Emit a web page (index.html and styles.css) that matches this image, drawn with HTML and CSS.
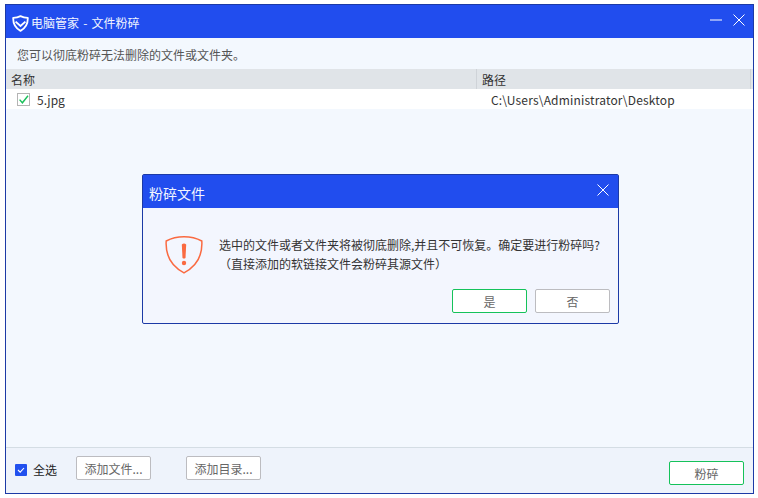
FILE: index.html
```html
<!DOCTYPE html>
<html lang="zh-CN">
<head>
<meta charset="utf-8">
<title>电脑管家 - 文件粉碎</title>
<link rel="stylesheet" href="styles.css">
</head>
<body>
<div class="window">
  <header class="titlebar">
    <svg class="logo" width="17" height="17" viewBox="0 0 17 17" fill="none" stroke="#fff"><path d="M8.5 1.1 C10.6 2.2 13 2.8 15.8 2.9 C16 8.6 14 13 8.5 15.9 C3 13 1 8.6 1.2 2.9 C4 2.8 6.4 2.2 8.5 1.1Z" stroke-width="1.8" stroke-linejoin="round"/><path d="M3.6 6.6 L8.5 11 L13.4 6.6" stroke-width="1.9"/></svg>
    <span class="title">电脑管家 - 文件粉碎</span>
    <span class="spacer"></span>
    <svg class="winctl" width="12" height="12" viewBox="0 0 12 12" stroke="#fff"><path d="M0 6H12"/></svg>
    <svg class="winctl" width="12" height="12" viewBox="0 0 12 12" stroke="#fff"><path d="M.5 .5L11.5 11.5M11.5 .5L.5 11.5"/></svg>
  </header>
  <p class="hint">您可以彻底粉碎无法删除的文件或文件夹。</p>
  <div class="thead">
    <div class="col-name">名称</div>
    <div class="col-path">路径</div>
  </div>
  <div class="row">
    <div class="cell-name">
      <svg class="check" width="13" height="13" viewBox="0 0 13 13" fill="none"><rect x=".5" y=".5" width="12" height="12" fill="#fff" stroke="#b4b4b4"/><path d="M2.6 6.6L5.4 9.8L11 2.8" stroke="#19c05a" stroke-width="1.4"/></svg>
      <span>5.jpg</span>
    </div>
    <div class="cell-path">C:\Users\Administrator\Desktop</div>
  </div>
  <div class="list-fill"></div>
  <footer class="footer">
    <label class="selall">
      <svg width="12" height="12" viewBox="0 0 12 12" fill="none"><rect width="12" height="12" rx="1" fill="#2150ee"/><path d="M3 6L5.2 8.2L9 4" stroke="#fff" stroke-width="1.1"/></svg>
      <span>全选</span>
    </label>
    <button class="btn btn-file">添加文件...</button>
    <button class="btn btn-dir">添加目录...</button>
    <span class="spacer"></span>
    <button class="btn btn-green btn-shred">粉碎</button>
  </footer>
</div>

<div class="dialog">
  <header class="dlg-title">
    <span>粉碎文件</span>
    <svg width="12" height="12" viewBox="0 0 12 12" stroke="#fff"><path d="M.5 .5L11.5 11.5M11.5 .5L.5 11.5"/></svg>
  </header>
  <div class="dlg-body">
    <svg class="warn" width="38" height="38" viewBox="0 0 38 38" fill="none"><path d="M19 .8 C25.5 .8 31.5 2.2 36.8 5 C37.6 18 33 29.5 19 36.8 C5 29.5 .4 18 1.2 5 C6.5 2.2 12.5 .8 19 .8Z" stroke="#fa6a41" stroke-width="1.5"/><path d="M16.8 8.5 Q19 6.6 21.2 8.5 L20.5 22 Q19 23.2 17.5 22 Z" fill="#fa6a41"/><circle cx="19" cy="27" r="2.2" fill="#fa6a41"/></svg>
    <div class="dlg-text">
      <div>选中的文件或者文件夹将被彻底删除,并且不可恢复。确定要进行粉碎吗?</div>
      <div class="dlg-sub">（直接添加的软链接文件会粉碎其源文件）</div>
    </div>
  </div>
  <div class="dlg-actions">
    <button class="btn btn-green">是</button>
    <button class="btn">否</button>
  </div>
</div>
</body>
</html>
```
FILE: styles.css
```css
* { box-sizing: border-box; }
html, body { margin: 0; height: 100%; background: #fff; }
body {
  font-family: "Noto Sans CJK SC", "Noto Sans", sans-serif;
  font-size: 12px;
  color: #333;
  padding: 4px 4px 4px 5px;
  position: relative;
  overflow: hidden;
}
.window {
  height: 490px;
  border: 1px solid #1c3aa6;
  display: flex;
  flex-direction: column;
  background: #f3f8fe;
}
.titlebar {
  height: 33px;
  flex: none;
  background: #214dee;
  display: flex;
  align-items: center;
  padding: 0 8px 0 6px;
  color: #fff;
}
.logo { flex: none; margin-top: 4px; }
.title { margin: 2px 0 0 2px; font-size: 12px; color: #f2f5ff; word-spacing: 1.5px; }
.spacer { flex: 1; }
.winctl { margin: 0 0 4px 11px; flex: none; }
.hint { margin: 0; height: 31px; flex: none; line-height: 33px; padding-left: 11px; color: #555; }
.thead {
  height: 20px;
  flex: none;
  background: #e0e4e8;
  display: flex;
  line-height: 21px;
  color: #333;
}
.col-name { width: 471px; padding-left: 5px; border-right: 1px solid #cfd3d8; }
.col-path { flex: 1; padding-left: 5px; margin-right: 2px; border-right: 1px solid #cfd3d8; }
.row { height: 20px; flex: none; padding-top: 1px; background: #fff; display: flex; align-items: center; }
.cell-name { width: 485px; display: flex; align-items: center; padding-left: 11px; gap: 7px; color: #333; }
.cell-path { flex: 1; color: #333; letter-spacing: .17px; }
.list-fill { flex: 1; }
.footer {
  height: 46px;
  flex: none;
  background: #eef3fb;
  border-top: 1px solid #d4dde4;
  display: flex;
  align-items: flex-start;
  padding: 8px 9px 0 9px;
}
.selall { display: flex; align-items: center; gap: 6px; color: #222; margin-top: 5px; line-height: 17px; width: 61px; }
.btn {
  width: 75px;
  height: 24px;
  padding: 0;
  background: #fff;
  border: 1px solid #bcbcc0;
  border-radius: 2px;
  font: inherit;
  font-size: 12px;
  color: #666;
}
.btn-dir { margin-left: 35px; }
.btn-green { border-color: #15c25a; }
.btn-shred { margin-top: 5px; }
.dialog {
  position: absolute;
  left: 142px;
  top: 174px;
  width: 477px;
  height: 150px;
  border: 1px solid #1c3aa6;
  border-radius: 2px;
  background: #f3f6fe;
  display: flex;
  flex-direction: column;
}
.dlg-title {
  height: 33px;
  flex: none;
  background: #214dee;
  color: #f2f5ff;
  display: flex;
  align-items: center;
  justify-content: space-between;
  padding: 0 9px 4px 6px;
  font-size: 14px;
}
.dlg-title span { padding-top: 7px; }
.dlg-body { display: flex; padding: 27px 0 0 22px; flex: none; height: 81px; }
.warn { flex: none; margin-top: 1px; }
.dlg-text { margin-left: 16px; line-height: 19px; color: #333; }
.dlg-actions { display: flex; justify-content: flex-end; gap: 8px; padding-right: 8px; }
```
